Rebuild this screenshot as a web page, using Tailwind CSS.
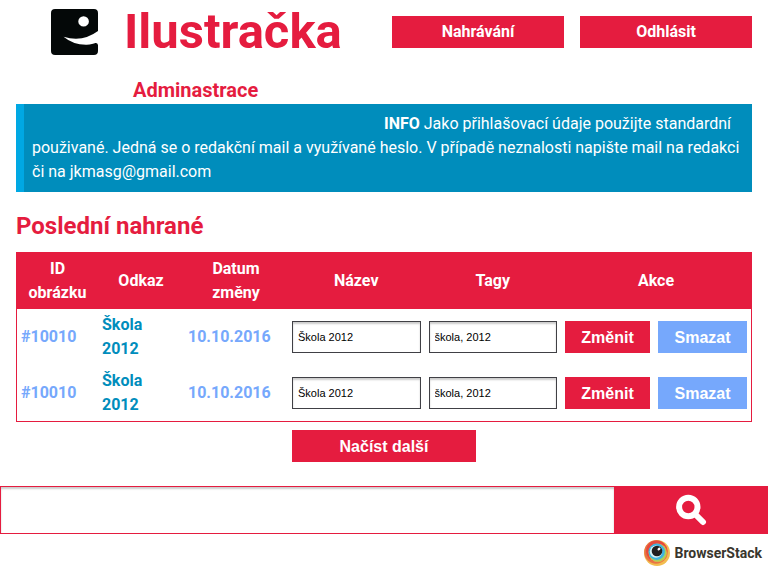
<!DOCTYPE html>
<html lang="cs">
<head>
<meta charset="utf-8">
<meta name="viewport" content="width=device-width, initial-scale=1">
<title>Ilustračka</title>
<script src="https://cdn.jsdelivr.net/npm/@tailwindcss/browser@4"></script>
</head>
<body class="bg-white font-[Roboto,sans-serif] text-base leading-6">
<header class="flex items-start px-4">
  <div class="flex flex-1 items-start gap-[26px]">
    <svg class="ml-[35px] mt-[9px] h-[46px] w-[47px]" viewBox="0 0 46 46" preserveAspectRatio="none" role="img" aria-label="Logo">
      <path fill="#040808" fill-rule="evenodd" d="M4 0H42Q46 0 46 4V22Q31 33.500 12.300 27.700Q22 36 35 35.700Q41 35.200 43.500 34Q45.500 33.700 46 36V42Q46 46 42 46H4Q0 46 0 42V4Q0 0 4 0ZM31.900 7.200A5.200 5.200 0 1 0 31.900 17.600A5.200 5.200 0 1 0 31.900 7.200Z"/>
    </svg>
    <h1 class="pt-1 text-[49px] leading-[56px] font-bold text-[#e51c3f]">Ilustračka</h1>
  </div>
  <nav class="mt-4 flex gap-4">
    <a href="#" class="block w-[172px] bg-[#e51c3f] py-1 text-center font-bold text-white">Nahrávání</a>
    <a href="#" class="block w-[172px] bg-[#e51c3f] py-1 text-center font-bold text-white">Odhlásit</a>
  </nav>
</header>
<main class="px-4">
  <h2 class="pt-4 pl-[117px] text-xl leading-7 font-bold text-[#e51c3f]">Adminastrace</h2>
  <p class="border-l-8 border-[#00a8e3] bg-[#008dbc] p-2 indent-[352px] text-white"><strong>INFO</strong> Jako přihlašovací údaje použijte standardní použivané. Jedná se o redakční mail a využívané heslo. V případě neznalosti napište mail na redakci či na jkmasg@gmail.com</p>
  <h2 class="pt-4 pb-2 text-2xl leading-9 font-bold text-[#e51c3f]">Poslední nahrané</h2>
  <table class="w-full table-fixed border-separate border-spacing-0 border border-[#e51c3f] font-bold">
    <colgroup><col class="w-[81px]"><col class="w-[86px]"><col class="w-[104px]"><col><col><col class="w-[190px]"></colgroup>
    <thead class="bg-[#e51c3f] text-white">
      <tr>
        <th class="p-1">ID obrázku</th><th class="p-1">Odkaz</th><th class="px-5 py-1">Datum změny</th><th class="p-1">Název</th><th class="p-1">Tagy</th><th class="p-1">Akce</th>
      </tr>
    </thead>
    <tbody>
      <tr>
        <td class="p-1 text-[#76a8fc]">#10010</td>
        <td class="py-1 pr-8 pl-1"><a href="#" class="text-[#008dbc]">Škola 2012</a></td>
        <td class="p-1 text-[#76a8fc]">10.10.2016</td>
        <td class="p-1"><input aria-label="Název" value="Škola 2012" class="block h-8 w-full border border-[#404045] px-[5px] font-['Liberation_Sans',sans-serif] text-[11px] font-normal text-black inset-shadow-[0_2px_2px_#ccc]"></td>
        <td class="p-1"><input aria-label="Tagy" value="škola, 2012" class="block h-8 w-full border border-[#404045] px-[5px] font-['Liberation_Sans',sans-serif] text-[11px] font-normal text-black inset-shadow-[0_2px_2px_#ccc]"></td>
        <td class="p-1"><div class="flex gap-2 font-['Liberation_Sans',sans-serif] text-white"><button class="h-8 w-[85px] bg-[#e51c3f] pt-0.5">Změnit</button><button class="h-8 flex-1 bg-[#76a8fc] pt-0.5">Smazat</button></div></td>
      </tr>
      <tr>
        <td class="p-1 text-[#76a8fc]">#10010</td>
        <td class="py-1 pr-8 pl-1"><a href="#" class="text-[#008dbc]">Škola 2012</a></td>
        <td class="p-1 text-[#76a8fc]">10.10.2016</td>
        <td class="p-1"><input aria-label="Název" value="Škola 2012" class="block h-8 w-full border border-[#404045] px-[5px] font-['Liberation_Sans',sans-serif] text-[11px] font-normal text-black inset-shadow-[0_2px_2px_#ccc]"></td>
        <td class="p-1"><input aria-label="Tagy" value="škola, 2012" class="block h-8 w-full border border-[#404045] px-[5px] font-['Liberation_Sans',sans-serif] text-[11px] font-normal text-black inset-shadow-[0_2px_2px_#ccc]"></td>
        <td class="p-1"><div class="flex gap-2 font-['Liberation_Sans',sans-serif] text-white"><button class="h-8 w-[85px] bg-[#e51c3f] pt-0.5">Změnit</button><button class="h-8 flex-1 bg-[#76a8fc] pt-0.5">Smazat</button></div></td>
      </tr>
    </tbody>
  </table>
  <button class="mx-auto mt-2 block h-8 w-1/4 bg-[#e51c3f] pt-0.5 font-['Liberation_Sans',sans-serif] font-bold text-white">Načíst další</button>
</main>
<form class="mt-6 flex h-12">
  <input type="search" aria-label="Hledat" class="w-4/5 border border-r-0 border-[#e51c3f] px-2 inset-shadow-[0_2px_2px_#ccc]">
  <button type="button" aria-label="Hledat" class="flex w-1/5 items-center justify-center bg-[#e51c3f]">
    <svg class="size-8" viewBox="0 0 32 32" fill="none" stroke="#fff" aria-hidden="true"><circle cx="13.300" cy="13" r="9.200" stroke-width="6"/><path d="M20.500 20.500L28 28" stroke-width="6" stroke-linecap="round"/></svg>
  </button>
</form>
<footer class="flex justify-end px-[6px] pt-[6px]">
  <a href="#" class="flex items-center gap-1 text-[#39362d]">
    <svg class="size-[26px]" viewBox="0 0 26 26" aria-hidden="true">
      <circle cx="13" cy="13" r="13" fill="#f2bd4f"/>
      <circle cx="12" cy="12" r="11.800" fill="#e87545"/>
      <circle cx="12.700" cy="11" r="10.600" fill="#e7493c"/>
      <circle cx="13.800" cy="12.800" r="9.300" fill="#f0a044"/>
      <circle cx="13.600" cy="12.800" r="8.900" fill="#a9d15a"/>
      <circle cx="12.700" cy="11.800" r="8.200" fill="#3fb4e0"/>
      <circle cx="12" cy="11.600" r="6.200" fill="#d9f2f5"/>
      <circle cx="13" cy="11" r="5.300" fill="#211f20"/>
      <ellipse cx="15" cy="9" rx="1.600" ry="1.200" fill="#fff" transform="rotate(-35 15 9)"/>
    </svg>
    <span class="text-sm leading-6 font-bold">BrowserStack</span>
  </a>
</footer>
</body>
</html>
